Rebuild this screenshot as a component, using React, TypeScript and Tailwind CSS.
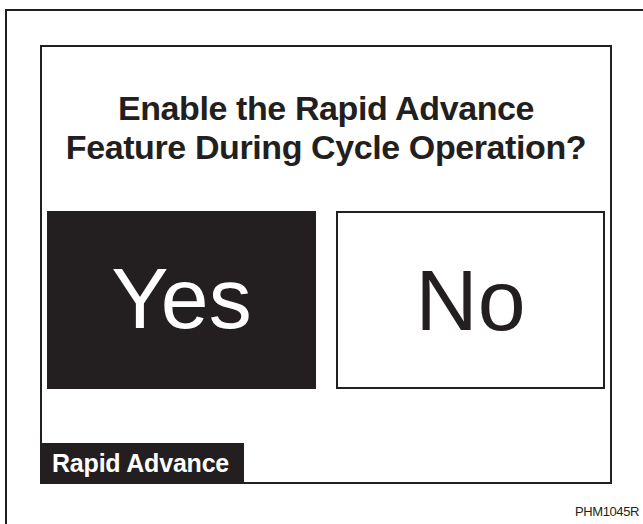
export default function App() {
  return (
    <div
      className="relative w-[643px] h-[524px] overflow-hidden bg-white pt-[9px] pl-[5px] text-[#231f20]"
      style={{ fontFamily: '"Liberation Sans", Arial, sans-serif' }}
    >
      <div className="h-[540px] w-[660px] border-t-2 border-l-2 border-[#231f20] pt-[34px] pl-[33px]">
        <div className="flex h-[439px] w-[572px] flex-col border-2 border-[#231f20]">
          <h1 className="mt-[42px] text-center text-[34px] font-bold leading-[39px] tracking-[-0.4px]">
            Enable the Rapid Advance
            <br />
            Feature During Cycle Operation?
          </h1>
          <div className="mt-[44px] flex gap-[20px] px-[5px]">
            <div className="flex h-[178px] w-[269px] items-center justify-center bg-[#231f20] pb-[4px] text-[86px] leading-none text-white">
              Yes
            </div>
            <div className="flex h-[178px] w-[269px] items-center justify-center border-2 border-[#231f20] text-[86px] leading-none">
              No
            </div>
          </div>
          <div className="mt-auto -mb-[2px] -ml-[2px] flex h-[41px] w-[204px] items-center bg-[#231f20] pl-[12px] text-[25px] font-bold tracking-[-0.2px] text-white">
            Rapid Advance
          </div>
        </div>
        <div className="mt-[21px] w-[599px] text-right text-[13px] leading-none tracking-[-0.4px]">PHM1045R</div>
      </div>
    </div>
  );
}
